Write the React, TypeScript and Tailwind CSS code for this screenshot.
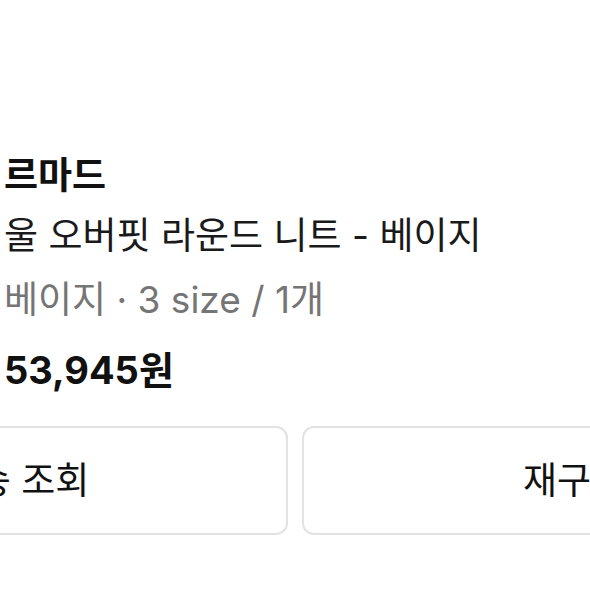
import React from "react";

export default function App() {
  const font = { fontFamily: 'Inter, "Noto Sans CJK KR", sans-serif' };
  return (
    <div className="w-[590px] h-[590px] overflow-hidden bg-white" style={font}>
      <div className="pt-[146px] pl-[4px]">
        <div className="text-[37px] leading-[60px] font-bold text-[#111111]">르마드</div>
        <div className="text-[37px] leading-[60px] text-[#1a1a1a]">울 오버핏 라운드 니트 - 베이지</div>
        <div className="mt-[4px] text-[37px] leading-[60px] text-[#757575]">베이지 · 3 size / 1개</div>
        <div className="mt-[8px] text-[38px] leading-[64px] font-bold text-[#111111]">53,945원</div>
      </div>
      <div className="mt-[24px] -ml-[256px] flex gap-[14px]">
        <button className="w-[544px] h-[109px] shrink-0 rounded-[12px] border-2 border-[#e2e2e2] bg-white text-[37px] text-[#111111]">
          배송 조회
        </button>
        <button className="w-[544px] h-[109px] shrink-0 rounded-[12px] border-2 border-[#e2e2e2] bg-white text-[37px] text-[#111111]">
          재구매
        </button>
      </div>
    </div>
  );
}
